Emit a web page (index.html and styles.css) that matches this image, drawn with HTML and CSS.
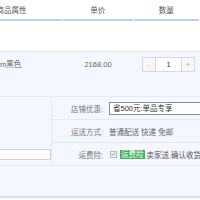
FILE: index.html
```html
<!DOCTYPE html>
<html>
<head>
<meta charset="utf-8">
<link rel="stylesheet" href="styles.css">
</head>
<body>
<div class="page">
  <div class="thead">
    <div class="th c1">商品属性</div>
    <div class="th c2">单价</div>
    <div class="th c3">数量</div>
  </div>
  <div class="gap"></div>
  <div class="tbody">
    <div class="item">
      <div class="td c1 left">m黑色</div>
      <div class="td c2">2168.00</div>
      <div class="td c3">
        <div class="qty">
          <span class="btn">-</span>
          <span class="num">1</span>
          <span class="btn">+</span>
        </div>
      </div>
    </div>
    <div class="info">
      <div class="memo">
        <div class="memo-input"></div>
      </div>
      <div class="opts">
        <div class="opt">
          <div class="lbl">店铺优惠:</div>
          <div class="val"><div class="select">省500元:单品专享</div></div>
        </div>
        <div class="opt">
          <div class="lbl">运送方式:</div>
          <div class="val">普通配送 快递 免邮</div>
        </div>
        <div class="opt">
          <div class="lbl">运费险:</div>
          <div class="val">
            <span class="check"><svg width="6" height="6" viewBox="0 0 6 6"><path d="M1 3.2 L2.4 4.6 L5 1.4" fill="none" stroke="#777" stroke-width="0.9"/></svg></span>
            <span class="badge">运费险</span>
            <span class="desc">卖家送,确认收货前退货可获保险赔付</span>
          </div>
        </div>
      </div>
    </div>
    <div class="foot"></div>
  </div>
</div>
</body>
</html>
```
FILE: styles.css
```css
html, body {
  margin: 0;
  padding: 0;
  background: #ffffff;
}
.page {
  width: 200px;
  height: 200px;
  overflow: hidden;
  font-family: "Liberation Sans", "Noto Sans CJK SC", sans-serif;
  font-size: 7.5px;
  color: #666;
}
.thead {
  display: flex;
  height: 19px;
  margin-left: -46px;
}
.th {
  box-sizing: border-box;
  height: 21px;
  line-height: 22px;
  text-align: center;
  color: #555;
  border-bottom: 2px solid #b6cff3;
  margin-right: 1px;
}
.th.c1 { padding-left: 7px; }
.c1 { width: 109px; }
.c2 { width: 70px; }
.c3 { width: 66px; }
.gap { height: 32px; }
.tbody {
  background: #f4f7fe;
  border-top: 1px solid #dce6f7;
}
.item {
  display: flex;
  height: 44px;
  box-sizing: border-box;
  padding-top: 5px;
  margin-left: -46px;
}
.td {
  line-height: 15px;
  text-align: center;
  margin-right: 1px;
}
.td.c1.left {
  text-align: left;
  padding-left: 46px;
  box-sizing: border-box;
}
.td.c3 {
  display: flex;
  justify-content: flex-end;
  padding-right: 4px;
  box-sizing: border-box;
}
.qty {
  display: flex;
  height: 15px;
  border: 1px solid #d6d9de;
  box-sizing: border-box;
  background: #fff;
}
.btn {
  width: 12px;
  background: #f6f7f9;
  color: #aaa;
  line-height: 13px;
  text-align: center;
  font-size: 7px;
}
.num {
  width: 25px;
  border-left: 1px solid #d6d9de;
  border-right: 1px solid #d6d9de;
  line-height: 13px;
  text-align: center;
  color: #333;
}
.info {
  display: flex;
  border-top: 1px solid #e6edf9;
  border-bottom: 1px solid #e2eaf8;
}
.memo {
  width: 57px;
  border-right: 1px solid #e2eaf8;
  display: flex;
  flex-direction: column;
  justify-content: flex-end;
  padding-bottom: 5px;
}
.memo-input {
  width: 55px;
  height: 11px;
  margin-left: -4px;
  background: #fff;
  border: 1px solid #cfd3d8;
  box-sizing: border-box;
}
.opts {
  flex: 1;
}
.opt {
  display: flex;
  align-items: center;
  height: 22px;
  border-bottom: 1px solid #e2eaf8;
}
.opt:last-child {
  border-bottom: none;
}
.lbl {
  width: 57px;
  text-align: right;
  color: #777;
  padding-right: 6px;
  box-sizing: border-box;
  white-space: nowrap;
}
.val {
  display: flex;
  align-items: center;
  white-space: nowrap;
  color: #666;
}
.select {
  width: 100px;
  height: 13px;
  box-sizing: border-box;
  border: 1px solid #8a8f96;
  background: #fff;
  color: #333;
  line-height: 11px;
  padding-left: 3px;
}
.check {
  width: 7px;
  height: 7px;
  box-sizing: border-box;
  border: 1px solid #bbb;
  background: #f1f1f1;
  display: flex;
  align-items: center;
  justify-content: center;
  margin-left: 1px;
  margin-right: 3px;
}
.badge {
  background: #3fae5d;
  color: #fff;
  padding: 0 1px;
  line-height: 9px;
  height: 9px;
}
.desc {
  margin-left: 2px;
  color: #555;
}
.foot {
  height: 30px;
  border-bottom: 2px solid #d2e0f6;
}
```
